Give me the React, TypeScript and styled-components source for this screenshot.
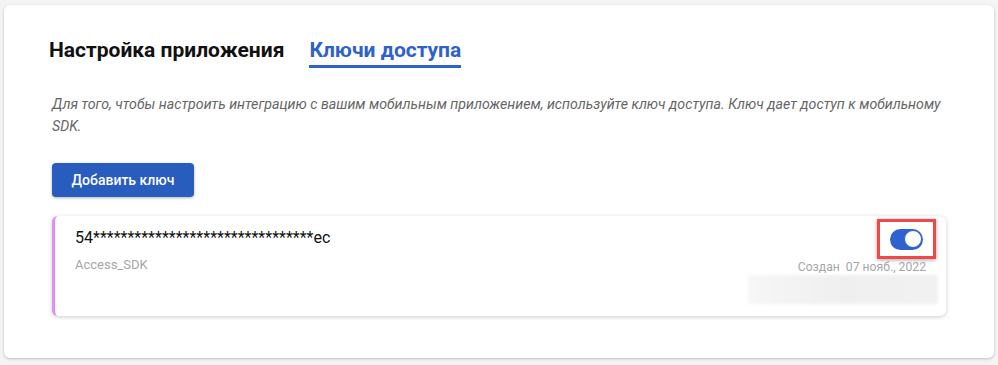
import React from "react";
import styled, { createGlobalStyle } from "styled-components";

const GlobalStyle = createGlobalStyle`
  html, body {
    margin: 0;
    padding: 0;
    background: #f4f4f4;
    font-family: Roboto, "Liberation Sans", sans-serif;
  }
`;

const Page = styled.div`
  width: 998px;
  height: 365px;
  padding: 5px 4px 7px 4px;
  box-sizing: border-box;
`;

const Card = styled.div`
  height: 100%;
  background: #fff;
  border-radius: 6px;
  box-shadow: 0 1px 3px rgba(0, 0, 0, 0.22);
  padding: 31px 48px 0 45px;
  box-sizing: border-box;
`;

const Tabs = styled.div`
  display: flex;
  gap: 25px;
`;

const Tab = styled.div<{ active?: boolean }>`
  font-size: 21px;
  font-weight: 700;
  line-height: 26px;
  padding: 1px 0 2px;
  color: ${(p) => (p.active ? "#2d62cc" : "#111")};
  border-bottom: 3px solid ${(p) => (p.active ? "#2d62cc" : "transparent")};
`;

const Description = styled.p`
  margin: 25px 0 0 3px;
  font-size: 14.2px;
  font-style: italic;
  line-height: 22px;
  color: #666;
`;

const AddButton = styled.button`
  margin: 26px 0 0 3px;
  height: 34px;
  width: 142px;
  border: none;
  border-radius: 4px;
  background: #285cbd;
  color: #fff;
  font-family: Roboto, "Liberation Sans", sans-serif;
  font-size: 14px;
  font-weight: 500;
  box-shadow: 0 1px 3px rgba(0, 0, 0, 0.3);
`;

const KeyCard = styled.div`
  margin: 19px 0 0 3px;
  height: 100px;
  background: #fff;
  border-radius: 6px;
  border-left: 3px solid #e08df7;
  box-shadow: 0 1px 4px rgba(0, 0, 0, 0.2);
  display: flex;
  justify-content: space-between;
  padding: 10px 20px 0 20px;
  box-sizing: border-box;
`;

const KeyInfo = styled.div`
  display: flex;
  flex-direction: column;
`;

const KeyValue = styled.div`
  font-size: 16px;
  color: #111;
  line-height: 24px;
`;

const KeyName = styled.div`
  margin-top: 7px;
  font-size: 13px;
  color: #a6a6a6;
`;

const KeyMeta = styled.div`
  display: flex;
  flex-direction: column;
  align-items: flex-end;
`;

const Highlight = styled.div`
  margin-top: -7px;
  margin-right: -10px;
  width: 59px;
  height: 40px;
  border: 3px solid #f0474a;
  box-shadow: 0 1px 4px rgba(0, 0, 0, 0.35);
  display: flex;
  align-items: center;
  justify-content: center;
  box-sizing: border-box;
`;

const Switch = styled.div<{ on: boolean }>`
  width: 33px;
  height: 21px;
  border-radius: 11px;
  background: ${(p) => (p.on ? "#2e63cf" : "#bbb")};
  display: flex;
  align-items: center;
  justify-content: ${(p) => (p.on ? "flex-end" : "flex-start")};
  padding: 0 1px;
  box-sizing: border-box;
`;

const Knob = styled.div`
  width: 18px;
  height: 18px;
  border-radius: 50%;
  background: #fff;
  border: 1px solid #2e63cf;
  box-sizing: border-box;
`;

const Created = styled.div`
  margin-top: 0px;
  font-size: 12.2px;
  line-height: 16px;
  color: #a6a6a6;
  white-space: pre;
`;

const Redacted = styled.div`
  margin-top: 0px;
  margin-right: -12px;
  width: 190px;
  height: 29px;
  background: linear-gradient(90deg, #f6f6f6, #efefef 50%, #f1f1f1);
  filter: blur(1.5px);
`;

export default function App() {
  return (
    <>
      <GlobalStyle />
      <Page>
        <Card>
          <Tabs>
            <Tab>Настройка приложения</Tab>
            <Tab active>Ключи доступа</Tab>
          </Tabs>
          <Description>
            Для того, чтобы настроить интеграцию с вашим мобильным приложением, используйте ключ доступа. Ключ дает
            доступ к мобильному SDK.
          </Description>
          <AddButton>Добавить ключ</AddButton>
          <KeyCard>
            <KeyInfo>
              <KeyValue>54********************************ec</KeyValue>
              <KeyName>Access_SDK</KeyName>
            </KeyInfo>
            <KeyMeta>
              <Highlight>
                <Switch on>
                  <Knob />
                </Switch>
              </Highlight>
              <Created>Создан  07 нояб., 2022</Created>
              <Redacted />
            </KeyMeta>
          </KeyCard>
        </Card>
      </Page>
    </>
  );
}
